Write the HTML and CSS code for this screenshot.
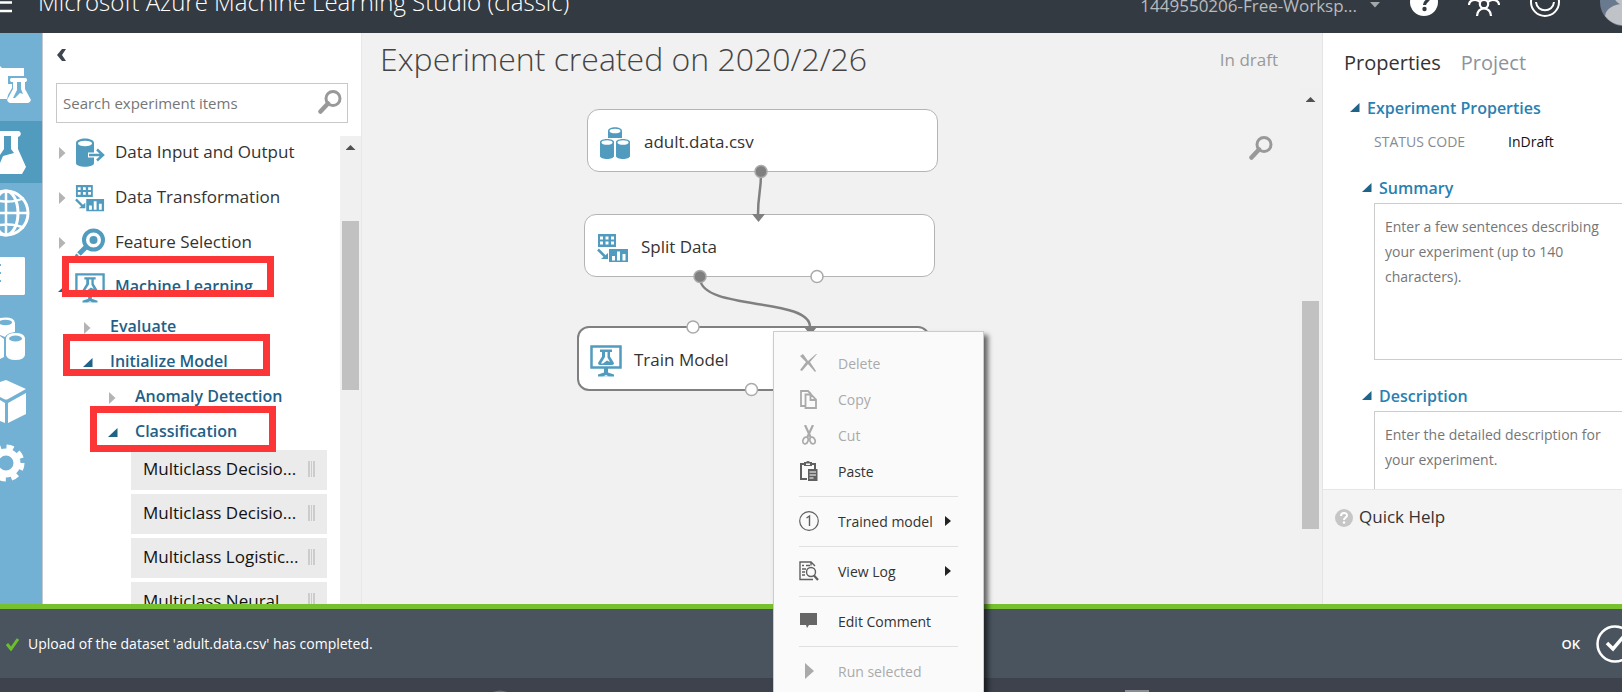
FILE: index.html
```
<!DOCTYPE html>
<html lang="en">
<head>
  <meta charset="UTF-8">
  <meta name="viewport" content="width=device-width, initial-scale=1.0">
  <title>Microsoft Azure Machine Learning Studio (classic)</title>
  <link rel="stylesheet" href="styles.css">
</head>
<body>
  <!-- shared icons -->
  <svg class="defs" width="0" height="0" aria-hidden="true">
    <symbol id="i-search" viewBox="0 0 24 24">
      <circle cx="15" cy="8.500" r="7" fill="none" stroke="#999" stroke-width="3"/>
      <path d="M10 13.500 L2.500 21.500" stroke="#999" stroke-width="4.500" stroke-linecap="round"/>
    </symbol>
    <symbol id="i-closed" viewBox="0 0 10 12"><path d="M1 0 L7.500 6 L1 12 Z" fill="#b4b4b4"/></symbol>
    <symbol id="i-open" viewBox="0 0 10 12"><path d="M9.500 1 V10 H0 Z" fill="#1f6389"/></symbol>
    <symbol id="i-transform" viewBox="0 0 32 30">
      <path fill="#519bbf" fill-rule="evenodd" d="M1 1h18v13H1z M3 3.500v3h3v-3z M8.500 3.500v3h3v-3z M14 3.500v3h3v-3z M3 8.500v3h3v-3z M8.500 8.500v3h3v-3z M14 8.500v3h3v-3z M12 16h19v13H12z M15 23v4.500h3V23z M20 18.500v9h3v-9z M25.500 21v6.500h3V21z"/>
      <path d="M1 16.500 L8 23.500" stroke="#519bbf" stroke-width="2.500"/>
      <path d="M11 20v6H4z" fill="#519bbf"/>
    </symbol>
    <symbol id="i-train" viewBox="0 0 32 32">
      <path d="M1.500 1.500h29v21h-29z" fill="#fff" stroke="#519bbf" stroke-width="2.500"/>
      <path d="M10 4.500h12V7h-2v4.500l4 6.500q0 2-2 2H10q-2 0-2-2l4-6.500V7h-2z" fill="#519bbf"/>
      <path d="M15 7h2.500v5.500l2.500 4.500-3-1.500-4 3h-2l4-6.500z" fill="#fff"/>
      <path d="M14 23h4v4.500l6 2v2H8v-2l6-2z" fill="#519bbf"/>
      <path d="M13 31.500h6l-3-1.500z" fill="#fff"/>
    </symbol>
  </svg>

  <header class="topbar">
    <div class="topbar-row">
      <button class="icon-btn burger" aria-label="Menu">
        <svg width="12" height="24" viewBox="0 0 12 24"><path d="M0 4h12M0 12.500h12M0 21h12" stroke="#fff" stroke-width="2.500"/></svg>
      </button>
      <span class="product">Microsoft Azure Machine Learning Studio (classic)</span>
      <button class="workspace">1449550206-Free-Worksp...
        <svg width="10" height="6" viewBox="0 0 10 6"><path d="M0 0h10L5 5.500z" fill="#a5a8ab"/></svg>
      </button>
      <button class="icon-btn" aria-label="Help">
        <svg width="30" height="30" viewBox="0 0 30 30"><circle cx="15" cy="15" r="14" fill="#fff"/><path d="M10.500 11c0-6 9.500-6 9.500-.5 0 3.500-4.500 3.500-4.500 7.500" fill="none" stroke="#343a41" stroke-width="3.200"/><circle cx="15.500" cy="22" r="2.200" fill="#343a41"/></svg>
      </button>
      <button class="icon-btn" aria-label="Community">
        <svg width="32" height="30" viewBox="0 0 32 30"><g fill="none" stroke="#fff" stroke-width="2.200"><circle cx="16" cy="17" r="4.200"/><path d="M9 29c0-10 14-10 14 0"/><circle cx="7" cy="8" r="4"/><circle cx="25" cy="8" r="4"/><path d="M1 18c0-5 7-7 11-3M31 18c0-5-7-7-11-3"/></g></svg>
      </button>
      <button class="icon-btn" aria-label="Feedback">
        <svg width="32" height="32" viewBox="0 0 32 32"><circle cx="16" cy="16" r="14" fill="none" stroke="#fff" stroke-width="2"/><path d="M7 16c1 11 17 11 18 0" fill="none" stroke="#fff" stroke-width="2"/></svg>
      </button>
      <button class="icon-btn avatar" aria-label="Account">
        <svg width="48" height="48" viewBox="0 0 48 48"><circle cx="24" cy="24" r="24" fill="#697a8e"/><circle cx="24" cy="17" r="10" fill="#bfc3c8"/><path d="M5 38c2-16 36-16 38 0a24 24 0 0 1-38 0z" fill="#bfc3c8"/></svg>
      </button>
    </div>
  </header>

  <main class="studio">
    <nav class="rail" aria-label="Studio sections">
      <button aria-label="Projects"><svg viewBox="0 0 42 62"><path d="M0 7l2 2h22v31H0z" fill="#fff"/><path d="M8 17h22v7l3 17v4H6l2-9 4-7v-4H8z" fill="#72b1d3"/><path fill-rule="evenodd" d="M11 19h15q2 2 0 4h-1v7l6 11q-1 3-3 3H10q-2 0-3-3l6-11v-7h-2q-2-2 0-4z M17 23v8l-4 8h2l5-5 3 1-2-5v-7z" fill="#fff"/></svg></button>
      <button class="active" aria-label="Experiments"><svg viewBox="0 0 42 62"><path fill-rule="evenodd" d="M0 10h19q3 2 1 5l-2 1v12l8 18-4 7H0V42l3-7 11-3-3-4V15H4v13l-4 6z" fill="#fff"/></svg></button>
      <button aria-label="Web services"><svg viewBox="0 0 42 62"><g fill="none" stroke="#fff" stroke-width="3"><circle cx="6" cy="30" r="22"/><ellipse cx="6" cy="30" rx="12" ry="22"/><path d="M6 8v44M0 30h28M0 18q14 2 24-3M0 42q14-2 24 3" stroke-width="2.500"/></g></svg></button>
      <button aria-label="Notebooks"><svg viewBox="0 0 42 62"><path d="M0 12h24l1 1v36l-1 1H0z" fill="#fff"/><path d="M0 20h1M0 28h1M0 36h1" stroke="#72b1d3" stroke-width="2"/></svg></button>
      <button aria-label="Datasets"><svg viewBox="0 0 42 62"><path d="M0 11q14-2 15 5v9q-8 1-10 5l-5-2z" fill="#fff"/><path d="M6 31q1-5 9.500-5t9.500 5v17q-1 5-9.500 5T6 48z" fill="#fff"/><path d="M0 29l4 3v18l-4 2z" fill="#fff"/><ellipse cx="5.500" cy="15.500" rx="6.500" ry="2.700" fill="#72b1d3"/><ellipse cx="15.500" cy="31.500" rx="6.500" ry="3" fill="#72b1d3"/></svg></button>
      <button aria-label="Trained models"><svg viewBox="0 0 42 62"><g fill="#fff"><path d="M0 13l6-2 20 9L8 30q-2 1-4 0l-4-2z"/><path d="M26 24v21L8 54V34z"/><path d="M0 31l5 3v20l-5-2z"/></g></svg></button>
      <button aria-label="Settings"><svg viewBox="0 0 42 62"><circle cx="6" cy="32" r="11" fill="none" stroke="#fff" stroke-width="7"/><circle cx="6" cy="32" r="16" fill="none" stroke="#fff" stroke-width="5" stroke-dasharray="7 5.570"/></svg></button>
    </nav>

    <aside class="palette">
      <button class="collapse" aria-label="Collapse panel"><svg width="10" height="14" viewBox="0 0 10 14"><path d="M9 1H5L0 7l5 6h4L5 7z" fill="#3d464f"/></svg></button>
      <div class="search">
        <input type="text" placeholder="Search experiment items" aria-label="Search experiment items">
        <button aria-label="Search"><svg width="24" height="24"><use href="#i-search"/></svg></button>
      </div>
      <div class="palette-body">
        <ul class="tree">
          <li class="row top"><svg class="tw" width="10" height="12"><use href="#i-closed"/></svg>
            <svg class="ico" width="30" height="30" viewBox="0 0 30 30"><path d="M1 5c0-6 18-6 18 0v20c0 5-18 5-18 0z" fill="#519bbf"/><ellipse cx="10" cy="5.500" rx="7" ry="2.700" fill="#fff"/><path d="M13 17h14M22 11l6 6-6 6" stroke="#fff" stroke-width="5" fill="none"/><path d="M14 17h14M22 11.500l6 5.500-6 5.500" stroke="#519bbf" stroke-width="2.500" fill="none"/></svg>
            <span>Data Input and Output</span></li>
          <li class="row top"><svg class="tw" width="10" height="12"><use href="#i-closed"/></svg>
            <svg class="ico" width="30" height="30"><use href="#i-transform"/></svg>
            <span>Data Transformation</span></li>
          <li class="row top"><svg class="tw" width="10" height="12"><use href="#i-closed"/></svg>
            <svg class="ico" width="30" height="30" viewBox="0 0 30 30"><circle cx="18.500" cy="12" r="9.500" fill="none" stroke="#519bbf" stroke-width="4"/><circle cx="18.500" cy="12" r="4" fill="#519bbf"/><path d="M11 19l-7 7" stroke="#519bbf" stroke-width="5"/><path d="M3 27l-2 2" stroke="#519bbf" stroke-width="4"/></svg>
            <span>Feature Selection</span></li>
          <li class="row top open"><svg class="tw" width="10" height="12"><use href="#i-open"/></svg>
            <svg class="ico" width="30" height="30"><use href="#i-train"/></svg>
            <span>Machine Learning</span></li>
          <li class="row sub open"><svg class="tw" width="10" height="12"><use href="#i-closed"/></svg><span>Evaluate</span></li>
          <li class="row sub open"><svg class="tw" width="10" height="12"><use href="#i-open"/></svg><span>Initialize Model</span></li>
          <li class="row sub2 open"><svg class="tw" width="10" height="12"><use href="#i-closed"/></svg><span>Anomaly Detection</span></li>
          <li class="row sub2 open"><svg class="tw" width="10" height="12"><use href="#i-open"/></svg><span>Classification</span></li>
          <li class="module"><span>Multiclass Decisio...</span><i class="grip"></i></li>
          <li class="module"><span>Multiclass Decisio...</span><i class="grip"></i></li>
          <li class="module"><span>Multiclass Logistic...</span><i class="grip"></i></li>
          <li class="module"><span>Multiclass Neural...</span><i class="grip"></i></li>
        </ul>
        <div class="scrollbar palette-scroll"><i class="up"></i><i class="thumb"></i></div>
      </div>
      <div class="mark mark-ml"></div>
      <div class="mark mark-init"></div>
      <div class="mark mark-class"></div>
    </aside>

    <section class="canvas">
      <div class="canvas-head">
        <h1>Experiment created on 2020/2/26</h1>
        <span class="state">In draft</span>
      </div>
      <button class="canvas-search" aria-label="Zoom"><svg width="24" height="24"><use href="#i-search"/></svg></button>

      <div class="node node-data">
        <svg width="30" height="32" viewBox="0 0 30 32"><g fill="#519bbf"><path d="M8 4c0-5 14-5 14 0v7H8z"/><path d="M0 15c0-4 14-4 14 0v14c0 4-14 4-14 0z"/><path d="M16 15c0-4 14-4 14 0v14c0 4-14 4-14 0z"/></g><g fill="#fff"><ellipse cx="15" cy="4" rx="5.500" ry="2.300"/><ellipse cx="7" cy="15.500" rx="5.500" ry="2.300"/><ellipse cx="23" cy="15.500" rx="5.500" ry="2.300"/></g></svg>
        <span>adult.data.csv</span>
      </div>
      <div class="node node-split">
        <svg width="32" height="30"><use href="#i-transform"/></svg>
        <span>Split Data</span>
      </div>
      <div class="node node-train">
        <svg width="32" height="32"><use href="#i-train"/></svg>
        <span>Train Model</span>
      </div>

      <!-- links and ports -->
      <svg class="links" width="600" height="400" viewBox="0 0 600 400">
        <g fill="none" stroke="#808080" stroke-width="2.500">
          <path d="M399 140 C399 160 396 160 396 182"/>
          <path d="M338 246 C341 278 448 264 448 294"/>
        </g>
        <path d="M390 181h13l-6.500 8z M442 294h13l-6.500 8z" fill="#808080"/>
        <g stroke="#aaa" stroke-width="1.500">
          <circle cx="399" cy="138.500" r="6" fill="#808080"/>
          <circle cx="338" cy="243.500" r="6" fill="#808080"/>
          <circle cx="455" cy="243.500" r="6" fill="#fff"/>
          <circle cx="331" cy="294" r="6" fill="#fff"/>
          <circle cx="389.500" cy="356.500" r="6" fill="#fff"/>
        </g>
      </svg>
      <div class="scrollbar canvas-scroll"><i class="up"></i><i class="thumb"></i></div>
    </section>

    <aside class="props">
      <div class="props-body">
        <div class="tabs">
          <button class="tab current">Properties</button>
          <button class="tab">Project</button>
        </div>
        <h2><svg width="10" height="12"><use href="#i-open"/></svg>Experiment Properties</h2>
        <dl>
          <dt>STATUS CODE</dt>
          <dd>InDraft</dd>
        </dl>
        <h3><svg width="10" height="12"><use href="#i-open"/></svg><label for="summary">Summary</label></h3>
        <textarea id="summary" placeholder="Enter a few sentences describing your experiment (up to 140 characters)."></textarea>
        <h3><svg width="10" height="12"><use href="#i-open"/></svg><label for="description">Description</label></h3>
        <textarea id="description" placeholder="Enter the detailed description for your experiment."></textarea>
      </div>
      <div class="quick-help">
        <svg width="18" height="18" viewBox="0 0 18 18"><circle cx="9" cy="9" r="9" fill="#c6c6c6"/><path d="M6 7c0-4 6-4 6-.5 0 2-3 2-3 4.500" fill="none" stroke="#fff" stroke-width="2"/><circle cx="9" cy="13.500" r="1.300" fill="#fff"/></svg>
        <span>Quick Help</span>
      </div>
    </aside>
  </main>

  <div class="toast" role="status">
    <svg width="14" height="14" viewBox="0 0 14 14"><path d="M1 7l4 5 7-10" fill="none" stroke="#6cbf2c" stroke-width="3"/></svg>
    <span>Upload of the dataset 'adult.data.csv' has completed.</span>
    <button class="ok">OK
      <svg width="38" height="38" viewBox="0 0 38 38"><circle cx="19" cy="19" r="17.500" fill="none" stroke="#fff" stroke-width="2.500"/><path d="M11 18l6 6 11-13" fill="none" stroke="#fff" stroke-width="3.500"/></svg>
    </button>
  </div>
  <footer class="commands">
    <svg width="14" height="2" viewBox="0 0 14 2"><path d="M0 2q7-3 14 0z" fill="#666b74"/></svg>
    <svg width="24" height="2" viewBox="0 0 24 2"><path d="M0 0h24v2H0z" fill="#8a8d93"/></svg>
  </footer>

  <div class="menu" role="menu">
    <button role="menuitem" disabled><svg viewBox="0 0 20 20"><path d="M1 3l3-2 5 7 8-7 1 0-7 8 6 9-1 1-7-8-6 7-2-1 6-8z" fill="#aaa"/></svg>Delete</button>
    <button role="menuitem" disabled><svg viewBox="0 0 20 20"><path d="M6 17H2V2h7l3 3M6.500 5.500H12l5 5V19H6.500zM11.500 6v5H17" fill="none" stroke="#aaa" stroke-width="1.800"/></svg>Copy</button>
    <button role="menuitem" disabled><svg viewBox="0 0 20 20"><path d="M6 0l6 13M14 0L8 13" stroke="#aaa" stroke-width="2.200"/><g fill="none" stroke="#aaa" stroke-width="1.700"><ellipse cx="6.500" cy="15.500" rx="2.500" ry="3.500" transform="rotate(20 6.500 15.500)"/><ellipse cx="13.500" cy="15.500" rx="2.500" ry="3.500" transform="rotate(-20 13.500 15.500)"/></g></svg>Cut</button>
    <button role="menuitem"><svg viewBox="0 0 20 20"><path d="M8 18H2V3h14v5" fill="none" stroke="#606060" stroke-width="2"/><path d="M5 1h2q2-2 4 0h2v4H5z" fill="#606060"/><path d="M7 2.500h4V4H7z" fill="#fafafa"/><path d="M9 8h9.500v12H9z" fill="#606060"/><path d="M10.500 11h6.500M10.500 14h6.500M10.500 17h4" stroke="#fff" stroke-width="1"/></svg>Paste</button>
    <hr>
    <button role="menuitem"><svg viewBox="0 0 20 20"><circle cx="10" cy="10" r="9.300" fill="none" stroke="#606060" stroke-width="1.200"/><path d="M7.500 7l3-2v10" fill="none" stroke="#606060" stroke-width="1.400"/></svg>Trained model<i class="more"></i></button>
    <hr>
    <button role="menuitem"><svg viewBox="0 0 20 20"><g fill="none" stroke="#606060" stroke-width="1.400"><path d="M14 18.500H1V1h11l4 4M12 1v3.500"/><path d="M3 4.500h2M7 4.500h4M3 8h4M3 11h3M3 14h3"/><circle cx="12" cy="11" r="4.500"/><path d="M15 14.500l4 4.500" stroke-width="2.200"/></g></svg>View Log<i class="more"></i></button>
    <hr>
    <button role="menuitem"><svg viewBox="0 0 20 20"><path d="M1 2h17v12h-8l-2 3-1-3H1z" fill="#666"/></svg>Edit Comment</button>
    <hr>
    <button role="menuitem" disabled><svg viewBox="0 0 20 20"><path d="M6 2l9 8-9 8z" fill="#aaa"/></svg>Run selected</button>
  </div>
</body>
</html>
```
FILE: styles.css
```
* {
  box-sizing: border-box;
}
body {
  margin: 0;
  height: 100vh;
  display: flex;
  flex-direction: column;
  overflow: hidden;
  position: relative;
  font-family: "Open Sans", "Noto Sans", sans-serif;
  font-size: 17px;
  color: #333;
  background-color: #f1f1f1;
}
button {
  font-family: inherit;
  font-size: inherit;
  color: inherit;
  background: none;
  border: none;
  padding: 0;
  cursor: pointer;
}
svg {
  display: block;
  flex: none;
}
.defs {
  position: absolute;
}

/* top bar */
.topbar {
  flex: none;
  height: 33px;
  display: flex;
  align-items: flex-end;
  overflow: hidden;
  background-color: #343a41;
  color: #fff;
}
.topbar-row {
  flex: 1;
  height: 62px;
  display: flex;
  align-items: center;
}
.product {
  margin-left: 26px;
  padding-bottom: 2px;
  font-size: 24px;
  font-weight: 300;
  white-space: nowrap;
}
.workspace {
  margin-left: auto;
  margin-right: 29px;
  display: flex;
  align-items: center;
  gap: 13px;
  color: #b8bbbe;
  padding-top: 6px;
}
.icon-btn + .icon-btn {
  margin-left: 29px;
}
.icon-btn.avatar {
  margin-left: 39px;
  margin-right: -26px;
}

.studio {
  flex: 1;
  min-height: 0;
  display: flex;
}

/* left rail */
.rail {
  flex: none;
  width: 43px;
  padding-top: 26px;
  background-color: #72b1d3;
  border-right: 1px solid #c4c8d0;
}
.rail button {
  display: block;
  width: 100%;
  height: 62px;
}
.rail svg {
  width: 42px;
  height: 62px;
}
.rail .active {
  background-color: #519bbf;
}

/* module palette */
.palette {
  position: relative;
  flex: none;
  width: 318px;
  display: flex;
  flex-direction: column;
  background-color: #fff;
}
.collapse {
  width: 10px;
  margin: 15px 0 0 14px;
}
.search {
  display: flex;
  align-items: center;
  height: 40px;
  margin: 21px 13px 0;
  padding: 0 5px 3px 0;
  border: 1px solid #c8c8c8;
}
.search input {
  flex: 1;
  min-width: 0;
  border: none;
  outline: none;
  padding: 2px 6px 0;
  font-family: inherit;
  font-size: 15px;
}
input::placeholder,
textarea::placeholder {
  color: #767676;
}
.palette-body {
  flex: 1;
  min-height: 0;
  display: flex;
  overflow: hidden;
  padding-top: 7px;
}
.tree {
  flex: 1;
  margin: 0;
  padding: 0;
  list-style: none;
  white-space: nowrap;
}
.row {
  display: flex;
  align-items: center;
  height: 35px;
  padding-left: 40px;
}
.row.top {
  height: 45px;
  padding-left: 15px;
}
.row.sub2 {
  padding-left: 65px;
}
.row span,
.module span,
.node span {
  padding-bottom: 3px;
}
.row span {
  margin-left: 17px;
}
.row .ico {
  margin-left: 7px;
}
.row .ico + span {
  margin-left: 10px;
}
.open {
  color: #235f87;
  font-weight: 600;
  font-size: 16px;
}
.module {
  display: flex;
  align-items: center;
  justify-content: space-between;
  height: 40px;
  margin: 0 13px 4px 88px;
  padding: 0 12px;
  background-color: #ebebeb;
  color: #111;
}
.grip {
  width: 7px;
  height: 16px;
  margin-bottom: 2px;
  border: solid #ccc;
  border-width: 0 2px;
  background: linear-gradient(#ccc, #ccc) center / 1px 100% no-repeat;
}

/* scrollbars */
.scrollbar {
  flex: none;
  width: 21px;
  background-color: #f0f0f0;
}
.scrollbar i {
  display: block;
}
.scrollbar .up {
  margin: 9px auto 0;
  width: 10px;
  height: 5px;
  background-color: #505050;
  clip-path: polygon(50% 0, 100% 100%, 0 100%);
}
.scrollbar .thumb {
  width: 17px;
  margin: 0 2px;
  background-color: #c1c1c1;
}
.palette-scroll {
  margin-top: 6px;
}
.palette-scroll .thumb {
  height: 169px;
  margin-top: 71px;
}

/* highlighted steps */
.mark {
  position: absolute;
  border: 7px solid #fc3636;
}
.mark-ml {
  left: 19px;
  top: 223px;
  width: 212px;
  height: 41px;
}
.mark-init {
  left: 20px;
  top: 301px;
  width: 207px;
  height: 42px;
}
.mark-class {
  left: 47px;
  top: 373px;
  width: 186px;
  height: 46px;
}

/* experiment canvas */
.canvas {
  position: relative;
  flex: 1;
  min-width: 0;
  overflow: hidden;
  border-left: 1px solid #e8e8e8;
}
.canvas-head {
  display: flex;
  justify-content: space-between;
  align-items: center;
  height: 52px;
  padding: 0 44px 0 18px;
}
h1 {
  margin: 0;
  font-size: 32px;
  font-weight: 300;
  line-height: 52px;
  color: #444;
  white-space: nowrap;
}
.state {
  color: #999;
}
.canvas-search {
  position: absolute;
  right: 49px;
  top: 103px;
}
.node {
  position: absolute;
  display: flex;
  align-items: center;
  gap: 12px;
  width: 351px;
  height: 63px;
  padding: 4px 12px 0;
  border: 1px solid #b4b4b4;
  border-radius: 12px;
  background-color: #fff;
}
.node-data {
  left: 225px;
  top: 76px;
  gap: 14px;
}
.node-split {
  left: 222px;
  top: 181px;
}
.node-train {
  left: 215px;
  top: 293px;
  width: 353px;
  height: 65px;
  padding-left: 11px;
  border: 2px solid #808080;
}
.links {
  position: absolute;
  left: 0;
  top: 0;
  pointer-events: none;
}
.canvas-scroll {
  position: absolute;
  right: 1px;
  top: 55px;
  bottom: 0;
}
.canvas-scroll .thumb {
  height: 228px;
  margin-top: 199px;
}

/* properties */
.props {
  flex: none;
  width: 300px;
  display: flex;
  flex-direction: column;
  overflow: hidden;
  background-color: #fff;
  border-left: 1px solid #e4e4e4;
}
.props-body {
  flex: 1;
  min-height: 0;
  overflow: hidden;
  padding: 15px 0 0 21px;
}
.tabs {
  display: flex;
  gap: 20px;
}
.tab {
  font-size: 20px;
  line-height: 30px;
  color: #8d939b;
}
.tab.current {
  color: #333;
}
h2,
h3 {
  display: flex;
  align-items: center;
  gap: 7px;
  margin: 0;
  font-size: 16px;
  line-height: 30px;
  font-weight: 600;
  color: #2980b1;
}
h2 {
  margin: 15px 0 0 6px;
}
h3 {
  margin: 19px 0 0 18px;
}
dl {
  display: flex;
  margin: 7px 0 0 30px;
  font-size: 14px;
  line-height: 24px;
}
dt {
  width: 134px;
  color: #868c94;
}
dd {
  margin: 0;
  color: #111;
}
textarea {
  display: block;
  width: 262px;
  height: 157px;
  margin-left: 30px;
  padding: 10px;
  border: 1px solid #ccc;
  outline: none;
  resize: none;
  font-family: inherit;
  font-size: 14px;
  line-height: 25px;
}
textarea + h3 {
  margin-top: 21px;
}
.quick-help {
  flex: none;
  display: flex;
  gap: 6px;
  align-items: flex-start;
  height: 115px;
  padding: 15px 12px;
  background-color: #f4f4f4;
  border-top: 1px solid #e6e6e6;
  line-height: 24px;
}
.quick-help svg {
  margin-top: 4px;
}

/* notification */
.toast {
  flex: none;
  display: flex;
  align-items: center;
  gap: 8px;
  height: 74px;
  padding-left: 6px;
  background-color: #49545f;
  border-top: 5px solid #78c12e;
  color: #fff;
  font-size: 14px;
}
.ok {
  display: flex;
  align-items: center;
  gap: 16px;
  margin-left: auto;
  margin-right: -12px;
  font-size: 13px;
  font-weight: 600;
}
.commands {
  flex: none;
  display: flex;
  justify-content: space-between;
  align-items: flex-end;
  height: 14px;
  padding: 0 473px 0 493px;
  background-color: #3d424d;
}

/* context menu */
.menu {
  position: absolute;
  left: 773px;
  top: 331px;
  bottom: 0;
  width: 211px;
  padding: 13px 25px 0;
  overflow: hidden;
  background-color: #fafafa;
  border: solid #ccc;
  border-width: 1px 1px 0;
  box-shadow: 4px 4px 5px rgba(0, 0, 0, 0.6);
}
.menu button {
  display: flex;
  align-items: center;
  width: 100%;
  height: 36px;
  font-size: 14px;
  white-space: nowrap;
}
.menu button:disabled {
  color: #aaa;
}
.menu svg {
  width: 20px;
  height: 20px;
  margin-right: 19px;
}
.menu hr {
  height: 1px;
  margin: 7px 0 6px;
  border: none;
  background-color: #e2dfe0;
}
.more {
  margin-left: auto;
  margin-right: 7px;
  border: solid transparent;
  border-width: 5px 0 5px 6px;
  border-left-color: #222;
}
```
